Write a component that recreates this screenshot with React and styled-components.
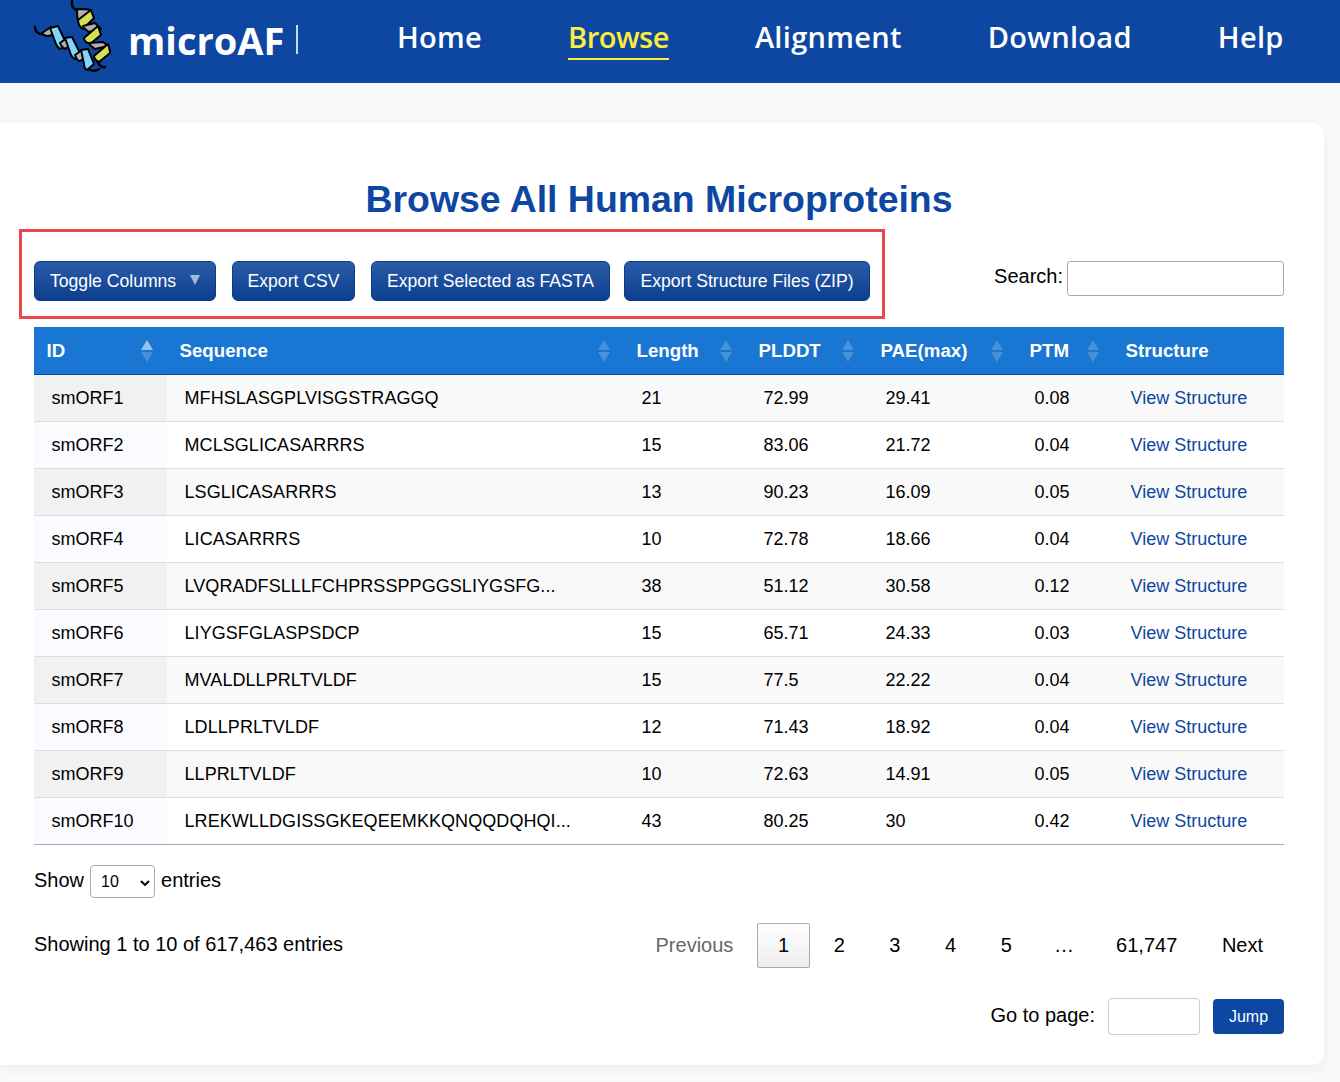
import React from "react";
import styled, { createGlobalStyle } from "styled-components";

const GlobalStyle = createGlobalStyle`
  html, body {
    margin: 0;
    padding: 0;
    background: #f7f9fb;
    font-family: "Liberation Sans", Arial, sans-serif;
    color: #000;
    overflow: hidden;
  }
`;

const Page = styled.div`
  width: 1340px;
  height: 1082px;
`;

const Header = styled.header`
  display: flex;
  align-items: flex-start;
  height: 83px;
  background: #0d47a1;
`;

const Brand = styled.div`
  box-sizing: border-box;
  display: flex;
  align-items: center;
  width: 397px;
  height: 83px;
  padding-bottom: 4px;
`;

const LogoSvg = styled.svg`
  flex: none;
  align-self: flex-start;
  width: 128px;
  height: 83px;
`;

const BrandName = styled.span`
  font-family: "Open Sans", sans-serif;
  font-weight: 700;
  font-size: 38px;
  color: #fff;
  line-height: 1;
`;

const BrandBar = styled.span`
  width: 2px;
  height: 29px;
  margin-left: 12px;
  background: #bbdefb;
`;

const Nav = styled.nav`
  display: flex;
  gap: 86px;
  margin-top: 17px;
`;

const NavLink = styled.a`
  font-family: "Open Sans", sans-serif;
  font-size: 29px;
  font-weight: 600;
  line-height: 40px;
  letter-spacing: ${(p) => (p.$active ? -0.5 : 0.3)}px;
  padding-bottom: 1px;
  color: ${(p) => (p.$active ? "#ffeb3b" : "#fff")};
  border-bottom: 2px solid ${(p) => (p.$active ? "#ffeb3b" : "transparent")};
`;

const Card = styled.main`
  box-sizing: border-box;
  width: 1324px;
  height: 942px;
  margin-top: 40px;
  padding: 52px 40px 0 34px;
  background: #fff;
  border-radius: 0 12px 12px 0;
  box-shadow: 0 4px 12px rgba(0, 0, 0, 0.05);
`;

const Title = styled.h1`
  margin: 0;
  height: 48px;
  font-size: 37.44px;
  line-height: 48px;
  font-weight: 700;
  text-align: center;
  color: #0d47a1;
`;

const Controls = styled.div`
  display: flex;
  justify-content: space-between;
  align-items: flex-start;
  height: 66px;
  margin-top: 38px;
`;

const Toolbar = styled.div`
  position: relative;
  display: flex;
  gap: 16px;
  &::after {
    content: "";
    position: absolute;
    inset: -32px -15px -18px -15px;
    border: 3px solid #e8474c;
    pointer-events: none;
  }
`;

const ActionButton = styled.button`
  box-sizing: border-box;
  display: flex;
  align-items: center;
  justify-content: ${(p) => (p.$caret ? "flex-start" : "center")};
  width: ${(p) => p.$w}px;
  height: 40px;
  padding: 0 0 0 ${(p) => (p.$caret ? 15 : 0)}px;
  margin-left: ${(p) => p.$ml || 0}px;
  border: 1px solid #0b3c88;
  border-radius: 6px;
  background: linear-gradient(#2a5ca8, #0d3f90);
  color: #fff;
  font-family: inherit;
  font-size: 17.6px;
`;

const Caret = styled.span`
  width: 0;
  height: 0;
  margin-left: 14px;
  margin-bottom: 2px;
  border-left: 5px solid transparent;
  border-right: 5px solid transparent;
  border-top: 10px solid rgba(255, 255, 255, 0.6);
`;

const SearchLabel = styled.label`
  display: flex;
  align-items: flex-start;
  gap: 4px;
  font-size: 20px;
  line-height: 30px;
`;

const SearchInput = styled.input`
  box-sizing: border-box;
  width: 217px;
  height: 35px;
  padding: 0 6px;
  border: 1px solid #aaa;
  border-radius: 3px;
  background: #fff;
`;

const Table = styled.table`
  width: 1250px;
  table-layout: fixed;
  border-collapse: collapse;
  font-size: 18px;
`;

const HeadCell = styled.th`
  height: 47px;
  padding: 0 0 0 12.5px;
  background: #1976d2;
  border-bottom: 1px solid #0d47a1;
  color: #fff;
  font-size: 18.7px;
  font-weight: 700;
  text-align: left;
`;

const HeadInner = styled.div`
  display: flex;
  align-items: center;
  justify-content: space-between;
  padding-right: ${(p) => p.$pad}px;
`;

const Sort = styled.span`
  display: flex;
  flex-direction: column;
  gap: 2px;
  &::before,
  &::after {
    content: "";
    width: 0;
    height: 0;
    border-left: 6px solid transparent;
    border-right: 6px solid transparent;
  }
  &::before {
    border-bottom: 10px solid rgba(255, 255, 255, ${(p) => (p.$active ? 0.55 : 0.2)});
  }
  &::after {
    border-top: 10px solid rgba(255, 255, 255, 0.2);
  }
`;

const Row = styled.tr`
  background: ${(p) => (p.$odd ? "#f9f9f9" : "#fff")};
`;

const Cell = styled.td`
  height: 46px;
  padding: 0 0 0 17.5px;
  border-bottom: 1px solid ${(p) => (p.$last ? "#aaa" : "#ddd")};
  white-space: nowrap;
  overflow: hidden;
`;

const IdCell = styled(Cell)`
  background: ${(p) => (p.$odd ? "#f1f1f1" : "#fafbfe")};
`;

const SequenceCell = styled(Cell)`
  letter-spacing: 0.07px;
`;

const StructureLink = styled.a`
  color: #0d47a1;
`;

const LengthControl = styled.div`
  display: flex;
  align-items: center;
  gap: 6px;
  margin-top: 19px;
  font-size: 20px;
  height: 33px;
`;

const LengthSelect = styled.select`
  box-sizing: border-box;
  flex: none;
  appearance: none;
  width: 65px;
  height: 33px;
  margin-top: 2px;
  padding: 0 10px;
  border: 1px solid #aaa;
  border-radius: 4px;
  background: #fff
    url("data:image/svg+xml,%3Csvg xmlns='http://www.w3.org/2000/svg' width='10' height='6'%3E%3Cpath d='M1 1l4 4 4-4' fill='none' stroke='%23000' stroke-width='2'/%3E%3C/svg%3E")
    no-repeat 49px 14px;
  font-family: inherit;
  font-size: 16px;
`;

const InfoRow = styled.div`
  display: flex;
  justify-content: space-between;
  align-items: flex-start;
  margin-top: 26px;
`;

const Info = styled.div`
  font-size: 20px;
  line-height: 43px;
`;

const Pager = styled.div`
  display: flex;
  align-items: center;
  font-size: 20px;
`;

const PageItem = styled.a`
  box-sizing: border-box;
  height: 45px;
  padding: 0 ${(p) => p.$px ?? 20}px;
  margin-left: 2.6px;
  line-height: 43px;
  text-align: center;
  color: ${(p) => (p.$muted ? "#666" : "#000")};
  border: 1px solid ${(p) => (p.$current ? "#aaa" : "transparent")};
  border-radius: 2px;
  background: ${(p) => (p.$current ? "linear-gradient(#fff, #ededed)" : "none")};
`;

const JumpRow = styled.div`
  display: flex;
  justify-content: flex-end;
  align-items: center;
  gap: 13px;
  margin-top: 30px;
  font-size: 20px;
`;

const JumpLabel = styled.span`
  margin-bottom: 2px;
`;

const JumpInput = styled.input`
  box-sizing: border-box;
  width: 92px;
  height: 37px;
  border: 1px solid #ccc;
  border-radius: 4px;
  background: #fff;
`;

const JumpButton = styled.button`
  width: 71px;
  height: 35px;
  border: none;
  border-radius: 4px;
  background: #0d47a1;
  color: #fff;
  font-family: inherit;
  font-size: 16px;
`;

const Logo = () => (
  <LogoSvg viewBox="0 0 128 83">
    <g fill="none" stroke="#000" strokeWidth="2" strokeLinecap="round" strokeLinejoin="round">
      <path d="M72 1c-1 6 2 9 6 9" strokeWidth="2.4" />
      <path d="M35 27c0 5 3 7 8 7" strokeWidth="2.4" />
      <path d="M85 67c4 4 10 5 14 2" strokeWidth="2.4" />
      <path d="M97 61c2 4 5 7 8 6" strokeWidth="2.4" />
      <path fill="#b0b0b0" d="M77 9c5 0 9 0 14 1L78 21c-1-4-1-8-1-12z" />
      <path fill="#d4e157" d="M78 20l13-10c1 3 2 6 3 8L83 29c-3-2-5-5-5-9z" />
      <path fill="#b0b0b0" d="M83 26l12-3 6 6-12 3c-3-2-5-3-6-6z" />
      <path fill="#d4e157" d="M84 38l14-12c1 3 2 6 3 9L90 44c-3-1-6-3-6-6z" />
      <path fill="#b0b0b0" d="M89 43l14-1 5 4-13 3c-3-2-5-3-6-6z" />
      <path fill="#d4e157" d="M94 56l14-12c1 3 2 6 2 9L99 62c-2-1-5-3-5-6z" />
      <path fill="#b0b0b0" d="M42 33l9-6 5 7-8 2c-3 0-5-1-6-3z" />
      <path fill="#81d4fa" d="M50 28l8-2 9 19-7 4c-2-1-3-3-4-5z" />
      <path fill="#b0b0b0" d="M60 43l8-6 4 7-7 5c-2-1-4-3-5-6z" />
      <path fill="#81d4fa" d="M65 38l7-1 9 18-6 4c-2-1-3-2-4-4z" />
      <path fill="#b0b0b0" d="M75 55l7-5 4 7-6 4c-2 0-4-3-5-6z" />
      <path fill="#81d4fa" d="M81 50l7-1 6 15-7 6c-2-1-3-3-3-6z" />
    </g>
  </LogoSvg>
);

const columns = [
  { label: "ID", width: 133, pad: 14 },
  { label: "Sequence", width: 457, pad: 14 },
  { label: "Length", width: 122, pad: 14 },
  { label: "PLDDT", width: 122, pad: 14 },
  { label: "PAE(max)", width: 149, pad: 14 },
  { label: "PTM", width: 96, pad: 14 },
  { label: "Structure", width: 171 },
];

const rows = [
  ["smORF1", "MFHSLASGPLVISGSTRAGGQ", "21", "72.99", "29.41", "0.08"],
  ["smORF2", "MCLSGLICASARRRS", "15", "83.06", "21.72", "0.04"],
  ["smORF3", "LSGLICASARRRS", "13", "90.23", "16.09", "0.05"],
  ["smORF4", "LICASARRRS", "10", "72.78", "18.66", "0.04"],
  ["smORF5", "LVQRADFSLLLFCHPRSSPPGGSLIYGSFG...", "38", "51.12", "30.58", "0.12"],
  ["smORF6", "LIYGSFGLASPSDCP", "15", "65.71", "24.33", "0.03"],
  ["smORF7", "MVALDLLPRLTVLDF", "15", "77.5", "22.22", "0.04"],
  ["smORF8", "LDLLPRLTVLDF", "12", "71.43", "18.92", "0.04"],
  ["smORF9", "LLPRLTVLDF", "10", "72.63", "14.91", "0.05"],
  ["smORF10", "LREKWLLDGISSGKEQEEMKKQNQQDQHQI...", "43", "80.25", "30", "0.42"],
];

export default function App() {
  return (
    <Page>
      <GlobalStyle />
      <Header>
        <Brand>
          <Logo />
          <BrandName>microAF</BrandName>
          <BrandBar />
        </Brand>
        <Nav>
          <NavLink>Home</NavLink>
          <NavLink $active>Browse</NavLink>
          <NavLink>Alignment</NavLink>
          <NavLink>Download</NavLink>
          <NavLink>Help</NavLink>
        </Nav>
      </Header>
      <Card>
        <Title>Browse All Human Microproteins</Title>
        <Controls>
          <Toolbar>
            <ActionButton $caret $w={182}>
              Toggle Columns
              <Caret />
            </ActionButton>
            <ActionButton $w={123}>Export CSV</ActionButton>
            <ActionButton $w={239}>Export Selected as FASTA</ActionButton>
            <ActionButton $w={246} $ml={-2}>
              Export Structure Files (ZIP)
            </ActionButton>
          </Toolbar>
          <SearchLabel>
            Search:
            <SearchInput type="search" />
          </SearchLabel>
        </Controls>
        <Table>
          <colgroup>
            {columns.map((c) => (
              <col key={c.label} width={c.width} />
            ))}
          </colgroup>
          <thead>
            <tr>
              {columns.map((c, i) => (
                <HeadCell key={c.label}>
                  <HeadInner $pad={c.pad || 0}>
                    {c.label}
                    {c.pad && <Sort $active={i === 0} />}
                  </HeadInner>
                </HeadCell>
              ))}
            </tr>
          </thead>
          <tbody>
            {rows.map((r, i) => {
              const odd = i % 2 === 0;
              const last = i === rows.length - 1;
              return (
                <Row key={r[0]} $odd={odd}>
                  <IdCell $odd={odd} $last={last}>
                    {r[0]}
                  </IdCell>
                  <SequenceCell $last={last}>{r[1]}</SequenceCell>
                  {r.slice(2).map((v, j) => (
                    <Cell key={j} $last={last}>
                      {v}
                    </Cell>
                  ))}
                  <Cell $last={last}>
                    <StructureLink>View Structure</StructureLink>
                  </Cell>
                </Row>
              );
            })}
          </tbody>
        </Table>
        <LengthControl>
          Show
          <LengthSelect defaultValue="10">
            <option>10</option>
            <option>25</option>
            <option>50</option>
          </LengthSelect>
          entries
        </LengthControl>
        <InfoRow>
          <Info>Showing 1 to 10 of 617,463 entries</Info>
          <Pager>
            <PageItem $muted>Previous</PageItem>
            <PageItem $current>1</PageItem>
            <PageItem>2</PageItem>
            <PageItem>3</PageItem>
            <PageItem>4</PageItem>
            <PageItem>5</PageItem>
            <PageItem $px={17.5}>…</PageItem>
            <PageItem>61,747</PageItem>
            <PageItem>Next</PageItem>
          </Pager>
        </InfoRow>
        <JumpRow>
          <JumpLabel>Go to page:</JumpLabel>
          <JumpInput />
          <JumpButton>Jump</JumpButton>
        </JumpRow>
      </Card>
    </Page>
  );
}
